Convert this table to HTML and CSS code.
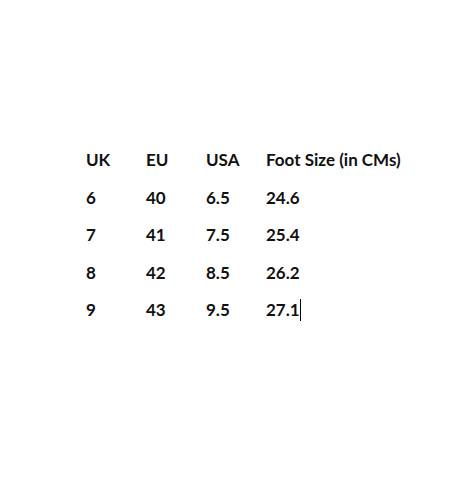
FILE: index.html
```html
<!DOCTYPE html>
<html>
<head>
<meta charset="utf-8">
<link rel="stylesheet" href="styles.css">
</head>
<body>
<div class="table">
  <div class="cell">UK</div><div class="cell">EU</div><div class="cell">USA</div><div class="cell">Foot Size (in CMs)</div>
  <div class="cell">6</div><div class="cell">40</div><div class="cell">6.5</div><div class="cell">24.6</div>
  <div class="cell">7</div><div class="cell">41</div><div class="cell">7.5</div><div class="cell">25.4</div>
  <div class="cell">8</div><div class="cell">42</div><div class="cell">8.5</div><div class="cell">26.2</div>
  <div class="cell">9</div><div class="cell">43</div><div class="cell">9.5</div><div class="cell">27.1<span class="caret"></span></div>
</div>
</body>
</html>
```
FILE: styles.css
```css
html, body {
  margin: 0;
  padding: 0;
  background: #fff;
}
body {
  width: 450px;
  height: 480px;
  overflow: hidden;
}
.table {
  display: grid;
  grid-template-columns: 60px 60px 60px auto;
  grid-auto-rows: 37.5px;
  padding-top: 141px;
  padding-left: 86px;
  font-family: Lato, "Open Sans", sans-serif;
  font-weight: 700;
  font-size: 17px;
  line-height: 37.5px;
  color: #111;
}
.cell {
  white-space: nowrap;
}
.caret {
  display: inline-block;
  width: 1px;
  height: 22px;
  background: #000;
  vertical-align: -5px;
}
```
